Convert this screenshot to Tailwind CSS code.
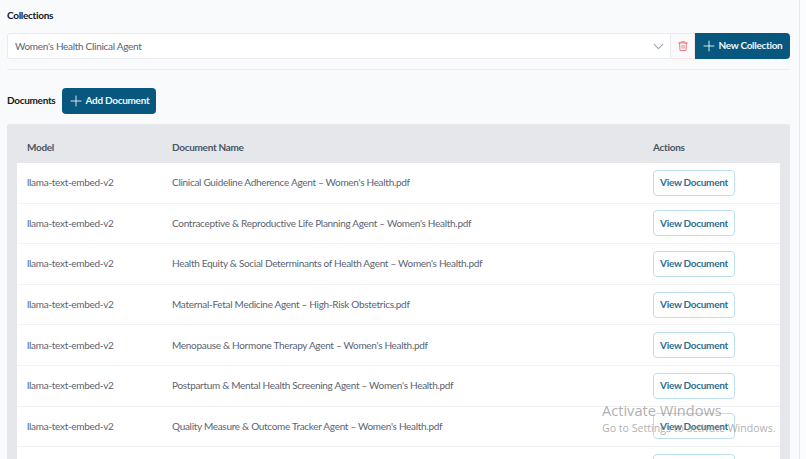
<!DOCTYPE html>
<html lang="en">
<head>
  <meta charset="UTF-8">
  <title>Collections</title>
  <script src="https://cdn.jsdelivr.net/npm/@tailwindcss/browser@4"></script>
</head>
<body class="h-[459px] overflow-hidden bg-[#f9fafb] font-['Lato',sans-serif] text-[10px] tracking-[-0.3px]">
  <div class="flex h-[459px] overflow-hidden">
    <main class="w-[799px] shrink-0 pl-[7px] pr-[9px] pt-[9px]">
      <h2 class="leading-[12px] font-bold text-[#111827]">Collections</h2>

      <div class="mt-[12px] flex h-[26px]">
        <div class="flex flex-1 items-center justify-between rounded-l-[3px] border border-[#e9eaee] bg-white pl-[7px] pr-[5px]">
          <span class="text-[#5b6472]">Women's Health Clinical Agent</span>
          <svg class="size-[13px] text-[#9ca3af]" viewBox="0 0 24 24" fill="none" stroke="currentColor" stroke-width="2" stroke-linecap="round" stroke-linejoin="round"><path d="m4 8 8 8 8-8"/></svg>
        </div>
        <button class="flex w-[24px] items-center justify-center border-y border-r border-[#fbe4e6] bg-[#f9fafb]">
          <svg class="size-[12px] text-[#ee7d86]" viewBox="0 0 24 24" fill="none" stroke="currentColor" stroke-width="2" stroke-linecap="round" stroke-linejoin="round"><path d="M3 6h18"/><path d="M8 6V3.5h8V6"/><path d="M5 6l1 15h12l1-15"/><path d="M10 10.5v6"/><path d="M14 10.5v6"/></svg>
        </button>
        <button class="flex w-[95px] items-center justify-center gap-[4px] rounded-r-[4px] bg-[#07577f] pb-[1px] font-bold text-[#eef6fa]">
          <svg class="size-[12px]" viewBox="0 0 24 24" fill="none" stroke="currentColor" stroke-width="1.8" stroke-linecap="round"><path d="M12 2v20"/><path d="M2 12h20"/></svg>
          New Collection
        </button>
      </div>

      <div class="mt-[10px] h-px bg-[#eceef1]"></div>

      <div class="mt-[18px] flex h-[26px] items-center gap-[7px]">
        <h2 class="pb-[2px] font-bold text-[#111827]">Documents</h2>
        <button class="flex h-[26px] w-[94px] items-center justify-center gap-[4px] rounded-[4px] bg-[#07577f] pb-[1px] font-bold text-[#eef6fa]">
          <svg class="size-[12px]" viewBox="0 0 24 24" fill="none" stroke="currentColor" stroke-width="1.8" stroke-linecap="round"><path d="M12 2v20"/><path d="M2 12h20"/></svg>
          Add Document
        </button>
      </div>

      <section class="mt-[10px] rounded-t-[3px] bg-[#e5e7eb] px-[10px]">
        <div class="grid h-[39px] grid-cols-[145px_481px_1fr] items-center pl-[10px] pt-[7px] font-bold text-[#4b5563]">
          <span>Model</span>
          <span>Document Name</span>
          <span>Actions</span>
        </div>
        <div class="bg-white text-[#5b6472]">
          <div class="grid h-[40.6px] grid-cols-[145px_481px_1fr] items-center border-b border-[#f1f2f4] pl-[10px]">
            <span>llama-text-embed-v2</span>
            <span>Clinical Guideline Adherence Agent – Women's Health.pdf</span>
            <button class="h-[26px] w-[82px] rounded-[4px] border border-[#bcdff0] font-bold text-[#2f6f8f]">View Document</button>
          </div>
          <div class="grid h-[40.6px] grid-cols-[145px_481px_1fr] items-center border-b border-[#f1f2f4] pl-[10px]">
            <span>llama-text-embed-v2</span>
            <span>Contraceptive &amp; Reproductive Life Planning Agent – Women's Health.pdf</span>
            <button class="h-[26px] w-[82px] rounded-[4px] border border-[#bcdff0] font-bold text-[#2f6f8f]">View Document</button>
          </div>
          <div class="grid h-[40.6px] grid-cols-[145px_481px_1fr] items-center border-b border-[#f1f2f4] pl-[10px]">
            <span>llama-text-embed-v2</span>
            <span>Health Equity &amp; Social Determinants of Health Agent – Women's Health.pdf</span>
            <button class="h-[26px] w-[82px] rounded-[4px] border border-[#bcdff0] font-bold text-[#2f6f8f]">View Document</button>
          </div>
          <div class="grid h-[40.6px] grid-cols-[145px_481px_1fr] items-center border-b border-[#f1f2f4] pl-[10px]">
            <span>llama-text-embed-v2</span>
            <span>Maternal-Fetal Medicine Agent – High-Risk Obstetrics.pdf</span>
            <button class="h-[26px] w-[82px] rounded-[4px] border border-[#bcdff0] font-bold text-[#2f6f8f]">View Document</button>
          </div>
          <div class="grid h-[40.6px] grid-cols-[145px_481px_1fr] items-center border-b border-[#f1f2f4] pl-[10px]">
            <span>llama-text-embed-v2</span>
            <span>Menopause &amp; Hormone Therapy Agent – Women's Health.pdf</span>
            <button class="h-[26px] w-[82px] rounded-[4px] border border-[#bcdff0] font-bold text-[#2f6f8f]">View Document</button>
          </div>
          <div class="grid h-[40.6px] grid-cols-[145px_481px_1fr] items-center border-b border-[#f1f2f4] pl-[10px]">
            <span>llama-text-embed-v2</span>
            <span>Postpartum &amp; Mental Health Screening Agent – Women's Health.pdf</span>
            <button class="h-[26px] w-[82px] rounded-[4px] border border-[#bcdff0] font-bold text-[#2f6f8f]">View Document</button>
          </div>
          <div class="grid h-[40.6px] grid-cols-[145px_481px_1fr] items-center border-b border-[#f1f2f4] pl-[10px]">
            <span>llama-text-embed-v2</span>
            <span>Quality Measure &amp; Outcome Tracker Agent – Women's Health.pdf</span>
            <button class="h-[26px] w-[82px] rounded-[4px] border border-[#bcdff0] font-bold text-[#2f6f8f]">View Document</button>
          </div>
          <div class="grid h-[40.6px] grid-cols-[145px_481px_1fr] items-center pl-[10px]">
            <span></span>
            <span></span>
            <button class="h-[26px] w-[82px] rounded-[4px] border border-[#bcdff0]"></button>
          </div>
        </div>
      </section>
    </main>
    <div class="flex-1 border-l border-[#e5e7eb] bg-[#fbfcfd]"></div>
  </div>

  <!-- windows watermark sits over the table -->
  <div class="pointer-events-none absolute left-[602px] top-[401px] font-['Open_Sans',sans-serif] tracking-normal text-[#9b9b9b]/80">
    <div class="text-[14.6px] leading-[18px]">Activate Windows</div>
    <div class="mt-[1px] text-[10.6px] leading-[16px]">Go to Settings to activate Windows.</div>
  </div>
</body>
</html>
